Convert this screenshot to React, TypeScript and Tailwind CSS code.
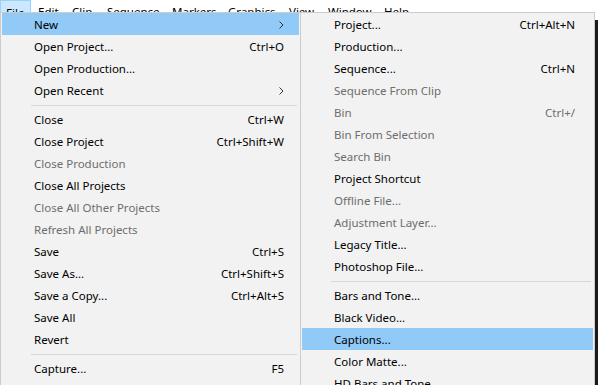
import { ReactNode } from 'react';

type Item = { label: string; shortcut?: string; disabled?: boolean; sub?: boolean; active?: boolean } | 'sep';

const fileMenu: Item[] = [
  { label: 'New', sub: true, active: true },
  { label: 'Open Project...', shortcut: 'Ctrl+O' },
  { label: 'Open Production...' },
  { label: 'Open Recent', sub: true },
  'sep',
  { label: 'Close', shortcut: 'Ctrl+W' },
  { label: 'Close Project', shortcut: 'Ctrl+Shift+W' },
  { label: 'Close Production', disabled: true },
  { label: 'Close All Projects' },
  { label: 'Close All Other Projects', disabled: true },
  { label: 'Refresh All Projects', disabled: true },
  { label: 'Save', shortcut: 'Ctrl+S' },
  { label: 'Save As...', shortcut: 'Ctrl+Shift+S' },
  { label: 'Save a Copy...', shortcut: 'Ctrl+Alt+S' },
  { label: 'Save All' },
  { label: 'Revert' },
  'sep',
  { label: 'Capture...', shortcut: 'F5' },
];

const newMenu: Item[] = [
  { label: 'Project...', shortcut: 'Ctrl+Alt+N' },
  { label: 'Production...' },
  { label: 'Sequence...', shortcut: 'Ctrl+N' },
  { label: 'Sequence From Clip', disabled: true },
  { label: 'Bin', shortcut: 'Ctrl+/', disabled: true },
  { label: 'Bin From Selection', disabled: true },
  { label: 'Search Bin', disabled: true },
  { label: 'Project Shortcut' },
  { label: 'Offline File...', disabled: true },
  { label: 'Adjustment Layer...', disabled: true },
  { label: 'Legacy Title...' },
  { label: 'Photoshop File...' },
  'sep',
  { label: 'Bars and Tone...' },
  { label: 'Black Video...' },
  { label: 'Captions...', active: true },
  { label: 'Color Matte...' },
  { label: 'HD Bars and Tone...' },
];

const bar = [
  { name: 'File', w: 'w-[31px] pl-[5px]' },
  { name: 'Edit', w: 'w-[35px] pl-[7px]' },
  { name: 'Clip', w: 'w-[35px] pl-[6px]' },
  { name: 'Sequence', w: 'w-[65px] pl-[6px]' },
  { name: 'Markers', w: 'w-[56px] pl-[6px]' },
  { name: 'Graphics', w: 'w-[61px] pl-[6px]' },
  { name: 'View', w: 'w-[39px] pl-[6px]' },
  { name: 'Window', w: 'w-[56px] pl-[6px]' },
  { name: 'Help', w: 'w-[42px] pl-[6px]' },
];

function Chevron() {
  return (
    <svg width="5" height="8" viewBox="0 0 5 8" className="shrink-0">
      <polyline points="0.5,0.5 4,4 0.5,7.5" fill="none" stroke="#333" strokeWidth="1" />
    </svg>
  );
}

function Menu({ items, right, gutter }: { items: Item[]; right: string; gutter: string }) {
  const rows: ReactNode[] = items.map((it, i) => {
    if (it === 'sep') {
      return (
        <div key={i} className={`h-[7px] pt-[4px] ${gutter} pr-[2px]`}>
          <div className="h-px bg-[#d7d7d7]" />
        </div>
      );
    }
    return (
      <div
        key={i}
        className={`h-[22px] flex items-center pt-[2px] pl-[32px] ${right} ${it.active ? 'bg-[#91c9f7]' : ''} ${it.disabled ? 'text-[#6d6d6d]' : 'text-black'}`}
      >
        <span className="flex-1 whitespace-nowrap">{it.label}</span>
        {it.shortcut && <span className="whitespace-nowrap">{it.shortcut}</span>}
        {it.sub && <Chevron />}
      </div>
    );
  });
  return <div className="px-px">{rows}</div>;
}

export default function App() {
  return (
    <div
      className="relative w-[598px] h-[385px] overflow-hidden bg-[#1b1b1b] text-[11.5px] leading-none"
      style={{ fontFamily: '"Noto Sans", "Open Sans", sans-serif' }}
    >
      {/* menu bar */}
      <div className="h-[20px] bg-white flex items-start">
        {bar.map((b, i) => (
          <div
            key={b.name}
            className={`${b.w} h-[20px] pt-[6px] text-black box-border ${i === 0 ? 'bg-[#cce8ff] border border-[#99d1ff] pl-[4px] pt-[5px]' : ''}`}
          >
            {b.name}
          </div>
        ))}
      </div>

      {/* File dropdown */}
      <div className="absolute top-[12px] left-0 w-[301px] h-[380px] bg-[#f2f2f2] border border-[#cccccc]">
        <Menu items={fileMenu} right="pr-[15px]" gutter="pl-[29px]" />
      </div>

      {/* New submenu */}
      <div className="absolute top-[12px] left-[300px] w-[295px] h-[380px] bg-[#f2f2f2] border border-[#cccccc]">
        <Menu items={newMenu} right="pr-[18px]" gutter="pl-[29px]" />
      </div>
    </div>
  );
}
